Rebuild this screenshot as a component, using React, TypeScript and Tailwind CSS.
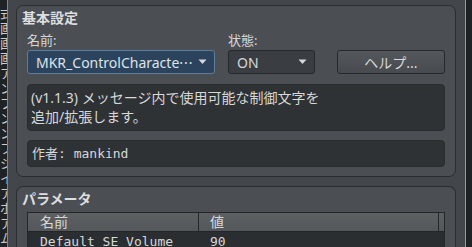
import React from 'react';

// ─── Config ───────────────────────────────────────────────────────────────────

const UI_FONT = { fontFamily: '"Noto Sans", "Noto Sans CJK JP", sans-serif' };
const MONO_FONT = { fontFamily: '"DejaVu Sans Mono", "Noto Sans CJK JP", monospace' };

const SIDE_GLYPHS = ['式', '画', '画', '画', 'ア', 'ン', 'プ', 'ン', 'ン', 'フ', 'シ', 'イ', 'ア', 'ボ', 'ア', 'ム'];

function Caret() {
  return (
    <svg width="9" height="6" viewBox="0 0 9 6" className="shrink-0">
      <path d="M0.5 0.5 L8.5 0.5 L4.5 5 Z" fill="#d6d9dc" />
    </svg>
  );
}

// ─── Main Page ────────────────────────────────────────────────────────────────

export default function App() {
  return (
    <div
      className="flex h-[247px] w-[472px] overflow-hidden bg-[#43464a] text-[13px] text-[#d6d8da]"
      style={UI_FONT}
    >
      {/* left list, cut off */}
      <div className="relative w-[7px] shrink-0 overflow-hidden bg-[#1f2326] text-[#c9ccd0]">
        <div className="absolute top-[6px] right-[-6px] flex flex-col leading-[15px]">
          {SIDE_GLYPHS.map((g, i) => (
            <span key={i}>{g}</span>
          ))}
        </div>
      </div>
      <div className="w-px shrink-0 bg-[#5c8fb3]" />

      {/* property panel */}
      <div className="flex w-[457px] shrink-0 flex-col gap-[9px] pt-[5px] pl-[8px] pr-[9px]">
        {/* 基本設定 */}
        <div className="h-[172px] shrink-0 rounded-[7px] border border-[#2b2e31] bg-[#4b4e52] px-[10px] pt-[3px]">
          <div className="ml-[-5px] text-[14px] leading-[18px] font-bold text-[#dcdee0]">基本設定</div>

          <div className="mt-[5px] flex gap-[13px] leading-[16px]">
            <div className="w-[188px]">名前:</div>
            <div>状態:</div>
          </div>

          <div className="mt-[2px] flex items-center">
            <div className="flex h-[24px] w-[188px] items-center justify-between rounded-[3px] border border-[#5d7d9d] bg-[#2c435d] pl-[8px] pr-[7px] text-[14px] text-[#dde3ea]">
              <span>
                MKR_ControlCharacte<span className="tracking-[1px]">···</span>
              </span>
              <Caret />
            </div>
            <div className="ml-[13px] flex h-[24px] w-[87px] items-center justify-between rounded-[3px] border border-[#26292c] bg-[#3a3d41] pl-[8px] pr-[7px] text-[14px]">
              <span>ON</span>
              <Caret />
            </div>
            <div className="ml-[22px] flex h-[24px] w-[108px] items-center justify-center rounded-[3px] border border-[#26292c] bg-gradient-to-b from-[#54575b] to-[#474a4e] text-[14px]">
              ヘルプ...
            </div>
          </div>

          <div className="mt-[10px] h-[47px] rounded-[4px] border border-[#292c2f] bg-[#2f3235] px-[3px] pt-[3px] text-[14px] leading-[19px]">
            <div>(v1.1.3) メッセージ内で使用可能な制御文字を</div>
            <div>追加/拡張します。</div>
          </div>

          <div
            className="mt-[9px] flex h-[27px] items-center rounded-[4px] border border-[#292c2f] bg-[#2f3235] pl-[4px] text-[13px]"
            style={MONO_FONT}
          >
            作者: mankind
          </div>
        </div>

        {/* パラメータ */}
        <div className="h-[70px] shrink-0 rounded-t-[7px] border border-b-0 border-[#2b2e31] bg-[#4b4e52] px-[10px] pt-[3px]">
          <div className="ml-[-5px] text-[14px] leading-[18px] font-bold text-[#dcdee0]">パラメータ</div>

          <div className="mt-[4px] border border-[#232629]">
            <div className="flex h-[19px] items-center border-b border-[#232629] bg-gradient-to-b from-[#5d6063] to-[#54575a] text-[14px]">
              <div className="h-full w-[171px] border-r border-[#232629] pl-[12px] leading-[18px]">名前</div>
              <div className="flex-1 pl-[11px] leading-[18px]">値</div>
              <div className="h-full w-[6px] border-l border-[#232629]" />
            </div>
            <div className="flex h-[20px] bg-[#2b2e31] pt-[2px] text-[13px] leading-[16px]" style={MONO_FONT}>
              <div className="w-[171px] pl-[12px]">Default SE Volume</div>
              <div className="pl-[11px]">90</div>
            </div>
          </div>
        </div>
      </div>

      {/* right edge */}
      <div className="w-px shrink-0 bg-[#6fa3c8]" />
      <div className="flex-1 bg-[#1f2326]" />
    </div>
  );
}
